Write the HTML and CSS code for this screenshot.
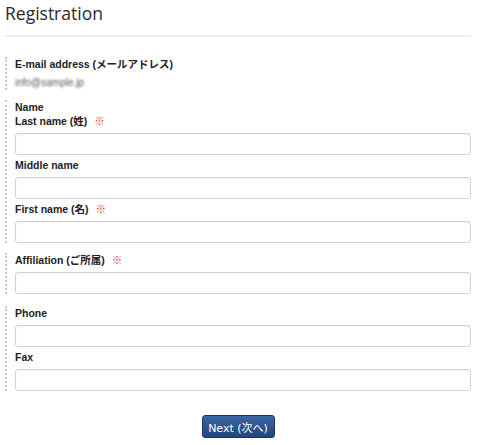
FILE: index.html
```html
<!DOCTYPE html>
<html lang="en">
<head>
<meta charset="utf-8">
<title>Registration</title>
<link rel="stylesheet" href="styles.css">
</head>
<body>
<div class="page">
  <h1 class="title">Registration</h1>
  <form class="form">
    <div class="group">
      <div class="label">E-mail address (メールアドレス)</div>
      <div class="value">info@sample.jp</div>
    </div>
    <div class="group">
      <div class="label">Name</div>
      <div class="field">
        <label class="label">Last name (姓)<span class="req">※</span></label>
        <input class="input" type="text">
      </div>
      <div class="field">
        <label class="label">Middle name</label>
        <input class="input" type="text">
      </div>
      <div class="field">
        <label class="label">First name (名)<span class="req">※</span></label>
        <input class="input" type="text">
      </div>
    </div>
    <div class="group">
      <div class="field">
        <label class="label">Affiliation (ご所属)<span class="req">※</span></label>
        <input class="input" type="text">
      </div>
    </div>
    <div class="group group-contact">
      <div class="field">
        <label class="label">Phone</label>
        <input class="input" type="text">
      </div>
      <div class="field">
        <label class="label">Fax</label>
        <input class="input" type="text">
      </div>
    </div>
    <div class="actions">
      <button class="btn" type="button">Next (次へ)</button>
    </div>
  </form>
</div>
</body>
</html>
```
FILE: styles.css
```css
* { box-sizing: border-box; }
html, body { margin: 0; padding: 0; background: #fff; }
body {
  font-family: "Liberation Sans", "Noto Sans CJK JP", sans-serif;
  color: #222;
}
.page {
  padding: 0 10px 0 5px;
}
.title {
  margin: 0;
  padding-top: 1px;
  font-family: "Open Sans", "Noto Sans CJK JP", sans-serif;
  font-weight: 400;
  font-size: 17.5px;
  line-height: 24px;
  color: #2a2a2a;
  padding-bottom: 10px;
  border-bottom: 2px solid #eeeeee;
}
.form {
  display: flex;
  flex-direction: column;
  gap: 10px;
  padding-top: 20px;
}
.group {
  border-left: 2px dotted #c8c8c8;
  padding-left: 8px;
  display: flex;
  flex-direction: column;
}
.group-contact { margin-top: 2px; }
.label {
  display: block;
  font-size: 10.5px;
  font-weight: 700;
  line-height: 14px;
  color: #222;
}
.field { display: flex; flex-direction: column; }
.field + .field { margin-top: 3px; }
.field .label { margin-bottom: 5px; }
.req {
  color: #d23c2a;
  font-weight: 400;
  margin-left: 7px;
}
.value {
  margin-top: 6px;
  font-size: 10px;
  line-height: 12px;
  color: #555566;
  filter: blur(0.8px);
  margin-bottom: 1px;
}
.input {
  display: block;
  width: 100%;
  height: 22px;
  margin: 0;
  border: 1px solid #cfd3d8;
  border-radius: 3px;
  background: #fff;
  box-shadow: inset 0 1px 1px rgba(0,0,0,0.04);
  font: inherit;
}
.actions {
  display: flex;
  justify-content: center;
  padding-top: 14px;
}
.btn {
  width: 73px;
  height: 23px;
  border: 1px solid #1c3560;
  border-radius: 3px;
  background: linear-gradient(#3b67a3, #22457c);
  color: #fff;
  font-family: "DejaVu Sans", "Noto Sans CJK JP", sans-serif;
  font-size: 11px;
  padding: 0;
  cursor: pointer;
}
```
